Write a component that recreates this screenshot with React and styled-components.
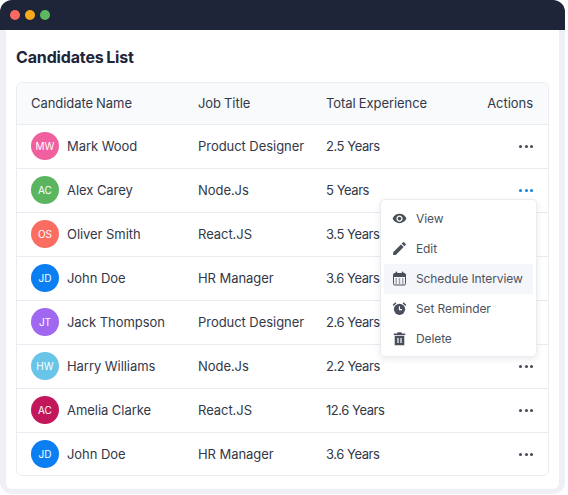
import React from 'react';
import styled, { createGlobalStyle } from 'styled-components';
import { MdRemoveRedEye, MdEdit } from 'react-icons/md';

const Global = createGlobalStyle`
  html, body { margin: 0; padding: 0; background: #fff; }
  body { font-family: Inter, "Noto Sans", sans-serif; -webkit-font-smoothing: antialiased; }
  * { box-sizing: border-box; }
`;

const Frame = styled.div`
  width: 565px; height: 494px; background: #eef0f6; border-radius: 12px;
  display: flex; flex-direction: column; overflow: hidden;
`;
const TitleBar = styled.div`
  height: 30px; background: #1e2539; display: flex; align-items: center; gap: 5px; padding-left: 10px; flex: none;
`;
const Light = styled.span`
  width: 10px; height: 10px; border-radius: 50%; background: ${p => p.$c};
`;
const Panel = styled.div`
  flex: 1; margin: 0 6px 5px; background: #fff; border-radius: 0 0 6px 6px; padding: 17px 10px 0;
`;
const Heading = styled.h1`
  margin: 0 0 15px; font-size: 16px; line-height: 20px; font-weight: 700; color: #1e2539;
  letter-spacing: -0.15px; word-spacing: -1px;
`;
const Table = styled.div`
  border: 1px solid #e9edf1; border-radius: 6px; width: 533px; height: 394px;
`;
const Row = styled.div`
  display: grid; grid-template-columns: 167px 128px 1fr auto; align-items: center;
  height: 44px; padding: 0 15px 1px 14px; font-size: 13px; color: #333849; letter-spacing: -0.05px;
  border-top: 1px solid #e9edf1;
`;
const HeadRow = styled(Row)`
  height: 41px; border-top: 0; background: #f8fafc; border-radius: 6px 6px 0 0; word-spacing: -0.6px;
`;
const NameCell = styled.div`
  display: flex; align-items: center; gap: 8px;
`;
const ExperienceCell = styled.div`
  letter-spacing: -0.45px;
`;
const Avatar = styled.span`
  width: 28px; height: 28px; border-radius: 50%; background: ${p => p.$c}; color: #fff;
  display: flex; align-items: center; justify-content: center; font-size: 10px; font-weight: 400; letter-spacing: 0;
`;
const ActionCell = styled.div`
  position: relative; display: flex; justify-content: flex-end;
`;
const Dots = styled.div`
  display: flex; gap: 2.5px; width: 15px; justify-content: flex-end;
`;
const Dot = styled.span`
  width: 3px; height: 3px; border-radius: 50%; background: ${p => (p.$active ? '#1482dc' : '#454a58')};
`;
const Menu = styled.div`
  position: absolute; top: 10px; right: -4px; width: 157px; height: 158px; z-index: 2;
  background: #fff; border: 1px solid #e9edf1; border-radius: 5px; padding: 4px 3px;
  box-shadow: 0 2px 6px rgba(30, 37, 57, 0.1);
  display: flex; flex-direction: column;
`;
const MenuItem = styled.div`
  display: flex; align-items: center; gap: 9px; height: 30px; padding-left: 8px; flex: none;
  font-size: 12px; color: #4d5260; letter-spacing: -0.1px;
  background: ${p => (p.$hi ? '#f4f6fa' : 'transparent')};
  svg { flex: none; color: #4a4f5c; }
`;

const CalendarIcon = () => (
  <svg width="15" height="15" viewBox="0 0 15 15" fill="none">
    <path d="M1 4.2A1.6 1.6 0 0 1 2.6 2.6H12.4A1.6 1.6 0 0 1 14 4.2V6H1Z" fill="currentColor" />
    <rect x="1.5" y="2.5" width="12" height="11.5" rx="1.3" stroke="currentColor" />
    <rect x="3.6" y="0.6" width="1.5" height="3.2" rx=".7" fill="currentColor" />
    <rect x="9.9" y="0.6" width="1.5" height="3.2" rx=".7" fill="currentColor" />
    <path d="M3.5 8h1.4M6.8 8h1.4M10.1 8h1.4M3.5 10h1.4M6.8 10h1.4M10.1 10h1.4M3.5 12h1.4M6.8 12h1.4M10.1 12h1.4" stroke="currentColor" strokeWidth="1.1" />
  </svg>
);
const AlarmIcon = () => (
  <svg width="15" height="15" viewBox="0 0 15 15">
    <circle cx="7.5" cy="8.3" r="5.6" fill="currentColor" />
    <path d="M7.4 5.2V8.6H10" stroke="#fff" strokeWidth="1.1" fill="none" />
    <path d="M.7 3.7 3.4 1.2l1 1.1-2.8 2.6ZM14.3 3.7 11.6 1.2l-1 1.1 2.8 2.6Z" fill="currentColor" />
  </svg>
);
const TrashIcon = () => (
  <svg width="15" height="15" viewBox="0 0 15 15">
    <path d="M1.8 2.4H5L5.8 1.2H9.2L10 2.4H13.2V4H1.8ZM2.7 4.8H12.3V14.2H2.7Z" fill="currentColor" />
    <path d="M6 7V12M9 7V12" stroke="#fff" strokeWidth="1.2" />
  </svg>
);

const people = [
  ['MW', '#f0609f', 'Mark Wood', 'Product Designer', '2.5 Years'],
  ['AC', '#5bb55e', 'Alex Carey', 'Node.Js', '5 Years'],
  ['OS', '#fb6d61', 'Oliver Smith', 'React.JS', '3.5 Years'],
  ['JD', '#0b7ff2', 'John Doe', 'HR Manager', '3.6 Years'],
  ['JT', '#a067f0', 'Jack Thompson', 'Product Designer', '2.6 Years'],
  ['HW', '#68c5e8', 'Harry Williams', 'Node.Js', '2.2 Years'],
  ['AC', '#c2185b', 'Amelia Clarke', 'React.JS', '12.6 Years'],
  ['JD', '#0b7ff2', 'John Doe', 'HR Manager', '3.6 Years'],
];

const menuItems = [
  ['View', <MdRemoveRedEye size={15} key="v" />],
  ['Edit', <MdEdit size={17} style={{ margin: '0 -1px' }} key="e" />],
  ['Schedule Interview', <CalendarIcon key="c" />, true],
  ['Set Reminder', <AlarmIcon key="a" />],
  ['Delete', <TrashIcon key="t" />],
];

export default function App() {
  return (
    <>
      <Global />
      <Frame>
        <TitleBar>
          <Light $c="#fb6a60" />
          <Light $c="#fba81c" />
          <Light $c="#5cb85f" />
        </TitleBar>
        <Panel>
          <Heading>Candidates List</Heading>
          <Table>
            <HeadRow>
              <div>Candidate Name</div>
              <div>Job Title</div>
              <div>Total Experience</div>
              <div>Actions</div>
            </HeadRow>
            {people.map(([ini, c, name, job, exp], i) => (
              <Row key={i}>
                <NameCell>
                  <Avatar $c={c}>{ini}</Avatar>
                  {name}
                </NameCell>
                <div>{job}</div>
                <ExperienceCell>{exp}</ExperienceCell>
                <ActionCell>
                  <Dots>
                    <Dot $active={i === 1} />
                    <Dot $active={i === 1} />
                    <Dot $active={i === 1} />
                  </Dots>
                  {i === 1 && (
                    <Menu>
                      {menuItems.map(([label, icon, hi]) => (
                        <MenuItem key={label} $hi={hi}>
                          {icon}
                          {label}
                        </MenuItem>
                      ))}
                    </Menu>
                  )}
                </ActionCell>
              </Row>
            ))}
          </Table>
        </Panel>
      </Frame>
    </>
  );
}
